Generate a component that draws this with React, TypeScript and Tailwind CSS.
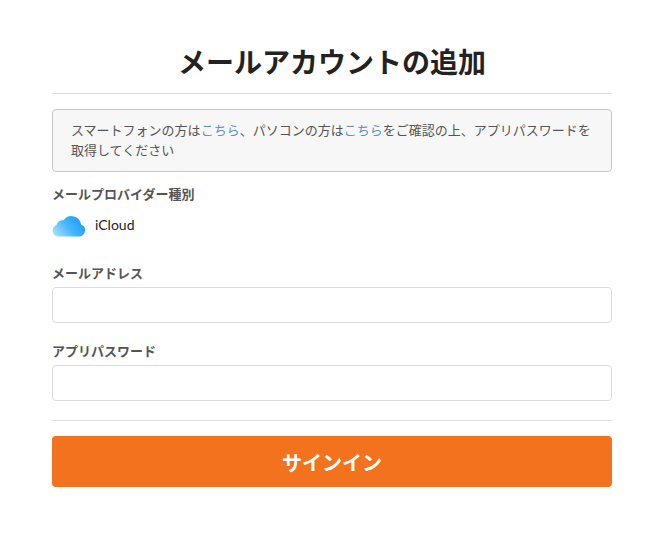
import { useId } from 'react'

// ─── iCloud logo ───────────────────────────────────────────────────────────────

function CloudLogo() {
  const id = useId()
  return (
    <svg width="34" height="23" viewBox="0 0 34 23" className="shrink-0">
      <defs>
        <linearGradient id={id} x1="0" y1="0.8" x2="1" y2="0.3">
          <stop offset="0" stopColor="#a9dffb" />
          <stop offset="0.5" stopColor="#45b6fc" />
          <stop offset="1" stopColor="#1a9bfb" />
        </linearGradient>
      </defs>
      <path
        d="M6.500 22.500A5.800 5.800 0 0 1 4.400 11.300A6.200 6.200 0 0 1 11.600 6.300A9.600 9.600 0 0 1 29 10.500A6.200 6.200 0 0 1 27.500 22.500Z"
        fill={`url(#${id})`}
      />
    </svg>
  )
}

function Field({ label }: { label: string }) {
  return (
    <div className="flex flex-col">
      <label className="mb-[5px] h-[20px] text-[13px] leading-[22px] font-bold text-[#555]">{label}</label>
      <input
        type="text"
        className="h-[36px] w-full rounded-[4px] border border-[#ddd] bg-white"
      />
    </div>
  )
}

export default function App() {
  return (
    <div
      className="min-h-[535px] bg-white pt-[41px] pr-[53px] pl-[52px] text-[#555]"
      style={{ fontFamily: 'Lato, "Noto Sans CJK JP", sans-serif' }}
    >
      <h1 className="h-[42px] text-center text-[28px] leading-[42px] font-bold text-[#222]">
        メールアカウントの追加
      </h1>
      <hr className="mt-[10px] border-t border-[#ddd]" />

      {/* notice */}
      <div className="mt-[15px] h-[63px] rounded-[4px] border border-[#c8c8c8] bg-[#f7f7f7] px-[18px] py-[10px] text-[13px] leading-[20px]">
        スマートフォンの方は<a className="text-[#5b93cf]">こちら</a>、パソコンの方は
        <a className="text-[#5b93cf]">こちら</a>をご確認の上、アプリパスワードを取得してください
      </div>

      {/* provider */}
      <div className="mt-[12px] h-[20px] text-[13px] leading-[20px] font-bold">メールプロバイダー種別</div>
      <div className="mt-[10px] flex h-[23px] items-center gap-[9px]">
        <CloudLogo />
        <span className="pb-[2px] text-[14px] text-[#222]">iCloud</span>
      </div>

      <div className="mt-[25px] flex flex-col gap-[17px]">
        <Field label="メールアドレス" />
        <Field label="アプリパスワード" />
      </div>

      <hr className="mt-[19px] border-t border-[#ddd]" />

      <button className="mt-[15px] h-[51px] w-full rounded-[4px] bg-[#f3721d] pt-[2px] text-center text-[20px] font-bold text-white">
        サインイン
      </button>
    </div>
  )
}
